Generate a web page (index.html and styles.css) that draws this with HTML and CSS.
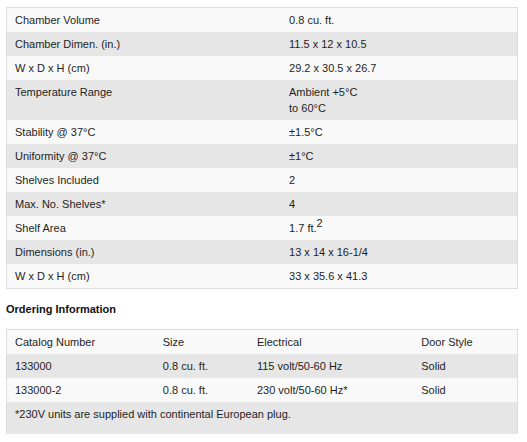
FILE: index.html
```html
<!DOCTYPE html>
<html>
<head>
<meta charset="utf-8">
<link rel="stylesheet" href="styles.css">
</head>
<body>
<table class="spec">
  <colgroup><col class="c1"><col class="c2"></colgroup>
  <tr><td>Chamber Volume</td><td>0.8 cu. ft.</td></tr>
  <tr><td>Chamber Dimen. (in.)</td><td>11.5 x 12 x 10.5</td></tr>
  <tr><td>W x D x H (cm)</td><td>29.2 x 30.5 x 26.7</td></tr>
  <tr><td>Temperature Range</td><td>Ambient +5°C<br>to 60°C</td></tr>
  <tr><td>Stability @ 37°C</td><td>±1.5°C</td></tr>
  <tr><td>Uniformity @ 37°C</td><td>±1°C</td></tr>
  <tr><td>Shelves Included</td><td>2</td></tr>
  <tr><td>Max. No. Shelves*</td><td>4</td></tr>
  <tr><td>Shelf Area</td><td>1.7 ft.<sup>2</sup></td></tr>
  <tr><td>Dimensions (in.)</td><td>13 x 14 x 16-1/4</td></tr>
  <tr><td>W x D x H (cm)</td><td>33 x 35.6 x 41.3</td></tr>
</table>
<h3 class="heading">Ordering Information</h3>
<table class="order">
  <colgroup><col class="o1"><col class="o2"><col class="o3"><col class="o4"></colgroup>
  <tr><td>Catalog Number</td><td>Size</td><td>Electrical</td><td>Door Style</td></tr>
  <tr><td>133000</td><td>0.8 cu. ft.</td><td>115 volt/50-60 Hz</td><td>Solid</td></tr>
  <tr><td>133000-2</td><td>0.8 cu. ft.</td><td>230 volt/50-60 Hz*</td><td>Solid</td></tr>
  <tr class="note"><td colspan="4">*230V units are supplied with continental European plug.</td></tr>
</table>
</body>
</html>
```
FILE: styles.css
```css
html, body {
  margin: 0;
  padding: 0;
  background: #ffffff;
}
body {
  padding: 7px 9px 0 6px;
  font-family: "Liberation Sans", Arial, sans-serif;
  font-size: 11px;
  color: #1e1e1e;
}
table {
  border-collapse: collapse;
  width: 512px;
  table-layout: fixed;
  border: 1px solid #dddddd;
}
td {
  padding: 4px 8px;
  line-height: 16px;
  vertical-align: top;
  text-align: left;
}
tr:nth-child(odd) td { background: #f9f9f9; }
tr:nth-child(even) td { background: #e6e6e6; }
.c1 { width: 274px; }
.c2 { width: 236px; }
sup {
  font-size: 11px;
  line-height: 0;
  vertical-align: 5px;
}
.heading {
  margin: 12px 0 12px 0;
  font-size: 11px;
  font-weight: bold;
  line-height: 16px;
  color: #111111;
}
.order { border-bottom: none; }
.o1 { width: 148px; }
.o2 { width: 94px; }
.o3 { width: 164px; }
.o4 { width: 104px; }
.order tr.note td {
  background: #e6e6e6;
  padding-bottom: 12px;
}
```
